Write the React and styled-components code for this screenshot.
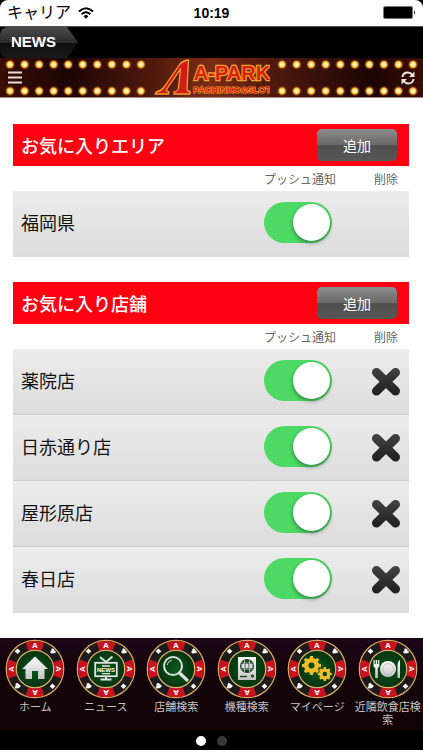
import { useState } from "react";
import styled, { createGlobalStyle } from "styled-components";

const BULBS = Array.from({ length: 10 }, (_, i) => 10 + i * 14.55);

const Bulbs = ({ flip }) => (
	<BulbStrip viewBox="0 0 152 40" $flip={flip} aria-hidden="true">
		<defs>
			<radialGradient id="bulb">
				<stop offset="0" stopColor="#fffbe0" />
				<stop offset="0.35" stopColor="#ffec8c" />
				<stop offset="0.58" stopColor="#f0a020" />
				<stop offset="0.72" stopColor="#a04c0c" stopOpacity="0.7" />
				<stop offset="1" stopColor="#70200a" stopOpacity="0" />
			</radialGradient>
		</defs>
		{BULBS.map((x) => (
			<g key={x} fill="url(#bulb)">
				<circle cx={x} cy="6.5" r="5.6" />
				<circle cx={x} cy="33" r="5.6" />
			</g>
		))}
	</BulbStrip>
);

const Logo = () => (
	<LogoArt viewBox="0 0 116 40" role="img" aria-label="A-PARK PACHINKO&SLOT">
		<path
			d="M1 36 L2 34 Q7 33 10 29 L26 6 Q29 2.5 34.5 2 L33 31 Q33 33 36 33.5 V36 H20 V34 Q24 33 24.5 30 L26.5 11 L13.5 30 Q11 33.5 15 34 L14.5 36 Z"
			fill="#d01c14"
			stroke="#f0a030"
			strokeWidth="1.3"
			strokeLinejoin="round"
		/>
		<text x="78" y="22" fontSize="20" strokeWidth="2.4">A-PARK</text>
		<text x="78" y="35" fontSize="9" strokeWidth="1.2">PACHINKO&amp;SLOT</text>
	</LogoArt>
);

const wedge = (angle) => (
	<path
		key={angle}
		d="M-9.5 -26.4 A28 28 0 0 1 9.5 -26.4 L6.4 -18 A19 19 0 0 0 -6.4 -18 Z"
		fill="#c8131f"
		transform={`rotate(${angle})`}
	/>
);

const Chip = ({ children }) => (
	<ChipArt viewBox="-30 -30 60 60" aria-hidden="true">
		<defs>
			<radialGradient id="felt">
				<stop offset="0" stopColor="#0c5a1c" />
				<stop offset="1" stopColor="#04310f" />
			</radialGradient>
			<linearGradient id="silver" x1="0" y1="0" x2="0" y2="1">
				<stop offset="0" stopColor="#fff" />
				<stop offset="1" stopColor="#c4c4c4" />
			</linearGradient>
		</defs>
		<circle r="28.7" fill="#1c1a1b" stroke="#d8a860" strokeWidth="1.3" />
		{[0, 90, 180, 270].map(wedge)}
		{[0, 90, 180, 270].map((a) => (
			<ChipLetter key={a} y="-21" transform={`rotate(${a})`}>A</ChipLetter>
		))}
		<g fill="#fff">
			<path d="M-17.5 -20.5 l2.8 2.8 -2.8 2.8 -2.8 -2.8z" />
			<path d="M17.5 14.5 l2.8 2.8 -2.8 2.8 -2.8 -2.8z" />
			<path d="M17 -20.5 q2.5 -0.5 2.2 1.5 q2 0.5 1.5 3 l-4.5 0.5 q-2 -2 0.2 -2.5 q-0.8 -1.5 0.6 -2.5z" />
			<path d="M-18.5 14 q2.5 -0.3 2.2 1.6 q2.4 0 1.6 2.4 l-2 1.2 -2.6 0.4 q-2.2 -1.2 0 -2.6 q-1 -2 0.8 -3z" />
		</g>
		<circle r="18.7" fill="url(#felt)" stroke="#d8b468" strokeWidth="1.2" />
		{children}
	</ChipArt>
);

const gear = (x, y, r) => (
	<g transform={`translate(${x} ${y})`}>
		<circle r={r * 0.56} fill="none" stroke="#f0bc28" strokeWidth={r * 0.48} />
		{[0, 45, 90, 135, 180, 225, 270, 315].map((a) => (
			<rect
				key={a}
				x={-r * 0.17}
				y={-r}
				width={r * 0.34}
				height={r * 0.32}
				fill="#f0bc28"
				transform={`rotate(${a})`}
			/>
		))}
	</g>
);

const NAV_ITEMS = [
	{
		label: "ホーム",
		icon: <path d="M0 -12.5 L13 0 H9.5 V10 H3 V2 H-3 V10 H-9.5 V0 H-13 Z" fill="url(#silver)" />,
	},
	{
		label: "ニュース",
		icon: (
			<g fill="none" stroke="#e2e2e2" strokeWidth="1.8">
				<path d="M-6 -12 L0 -7 L6.5 -12.5" />
				<rect x="-10.8" y="-6.2" width="21.6" height="13.4" />
				<path d="M-5.5 10.6 H5.5 M0 7 V10" strokeWidth="2" />
				<path d="M-4 -3 H4 M-4 4.6 H4" strokeWidth="1.4" />
				<text y="3.1" fill="#fff" stroke="none">NEWS</text>
			</g>
		),
	},
	{
		label: "店舗検索",
		icon: (
			<g fill="none" stroke="#dedede">
				<circle cx="-3" cy="-3" r="9" strokeWidth="2" />
				<path d="M3.5 4 L11 11" strokeWidth="3.2" strokeLinecap="round" />
				<path d="M-9 -4 Q-8 -8 -4 -9" strokeWidth="1" />
			</g>
		),
	},
	{
		label: "機種検索",
		icon: (
			<g>
				<rect x="-9" y="-12" width="18" height="23" rx="0.5" fill="url(#silver)" />
				<circle cy="-3" r="7" fill="#174423" />
				<path
					d="M-5.5 -6 H5.5 M-5.5 0 H5.5 M-2.5 -9 V3 M2.5 -9 V3"
					fill="none"
					stroke="#dedede"
					strokeWidth="0.7"
				/>
				<rect x="-5.5" y="-5" width="11" height="4" fill="#dedede" />
				<path d="M-1.9 -5 V-1 M1.9 -5 V-1" stroke="#174423" strokeWidth="0.7" />
				<path d="M-7 7.5 H0" stroke="#174423" strokeWidth="1.4" />
				<circle cx="5.5" cy="7" r="1.6" fill="#174423" />
			</g>
		),
	},
	{
		label: "マイページ",
		icon: (
			<>
				{gear(-5.5, -3.5, 9.5)}
				{gear(7.8, 5, 7)}
			</>
		),
	},
	{
		label: "近隣飲食店検索",
		icon: (
			<g fill="url(#silver)">
				<circle r="8" />
				<circle r="5.4" fill="none" stroke="#b4b4b4" strokeWidth="0.8" />
				<path d="M-14.5 -9 h1.2 v4 h1 v-4 h1.4 v4 h1 v-4 h1.2 v6 q0 1.5 -1.5 2 v10 h-2.6 v-10 q-1.7 -0.5 -1.7 -2z" />
				<path d="M12 9 h-2.5 V-2 q0 -6 2.5 -7z" />
			</g>
		),
	},
];

const SECTIONS = [
	{ title: "お気に入りエリア", rows: ["福岡県"], removable: false },
	{
		title: "お気に入り店舗",
		rows: ["薬院店", "日赤通り店", "屋形原店", "春日店"],
		removable: true,
	},
];

const FavoriteRow = ({ name, removable }) => {
	const [on, setOn] = useState(true);

	return (
		<Row>
			<th scope="row">{name}</th>
			<td>
				<Switch
					type="checkbox"
					role="switch"
					aria-label={name}
					checked={on}
					onChange={(e) => setOn(e.target.checked)}
				/>
			</td>
			<td>
				{removable && (
					<DeleteButton type="button" aria-label={`${name} 削除`}>
						<svg width="30" height="30" viewBox="0 0 30 30">
							<defs>
								<linearGradient id="cross" x1="0" y1="0" x2="0" y2="30" gradientUnits="userSpaceOnUse">
									<stop offset="0" stopColor="#454545" />
									<stop offset="1" stopColor="#1d1d1d" />
								</linearGradient>
							</defs>
							<path
								d="M5.5 6.5 L24.5 25 M24.5 6.5 L5.5 25"
								stroke="url(#cross)"
								strokeWidth="9"
								strokeLinecap="round"
							/>
						</svg>
					</DeleteButton>
				)}
			</td>
		</Row>
	);
};

const App = () => (
	<>
		<GlobalStyle />
		<Screen>
			<StatusBar>
				<Carrier>
					キャリア
					<svg width="16" height="12" viewBox="0 0 16 12" fill="none" stroke="#000" strokeWidth="2">
						<path d="M1 4.4 Q8 -2 15 4.4" />
						<path d="M3.6 7.2 Q8 3.2 12.4 7.2" />
						<path d="M5.6 9.2 Q8 7 10.4 9.2 L8 11.8Z" fill="#000" stroke="none" />
					</svg>
				</Carrier>
				<time>10:19</time>
				<Battery viewBox="0 0 33 14">
					<rect x="0.5" y="0.5" width="29" height="12" rx="1.5" fill="#000" stroke="#777" />
					<path d="M31 4.5 Q33 6.5 31 8.5Z" />
				</Battery>
			</StatusBar>
			<NewsBar>
				<NewsTag href="#news">NEWS</NewsTag>
			</NewsBar>
			<Banner>
				<Bulbs />
				<Logo />
				<Bulbs flip />
				<BannerButton type="button" aria-label="メニュー" $side="left">
					<svg width="14" height="13" viewBox="0 0 14 13" stroke="#e8dfd4" strokeWidth="2.2">
						<path d="M0 1.5 H14 M0 6.5 H14 M0 11.5 H14" />
					</svg>
				</BannerButton>
				<BannerButton type="button" aria-label="更新" $side="right">
					<svg width="14" height="14" viewBox="0 0 14 14" fill="none" stroke="#ece6e0" strokeWidth="2">
						<path d="M1.5 6 Q2 1.5 7 1.5 Q9.5 1.5 11.5 4" />
						<path d="M12.5 8 Q12 12.5 7 12.5 Q4.5 12.5 2.5 10" />
						<path d="M13.5 0.5 V6 H8Z M0.5 13.5 V8 H6Z" fill="#ece6e0" stroke="none" />
					</svg>
				</BannerButton>
			</Banner>
			<Main>
				{SECTIONS.map(({ title, rows, removable }) => (
					<section key={title}>
						<SectionHeader>
							<h2>{title}</h2>
							<AddButton type="button">追加</AddButton>
						</SectionHeader>
						<Favorites>
							<thead>
								<tr>
									<td />
									<PushHead scope="col">プッシュ通知</PushHead>
									<DeleteHead scope="col">削除</DeleteHead>
								</tr>
							</thead>
							<tbody>
								{rows.map((name) => (
									<FavoriteRow key={name} name={name} removable={removable} />
								))}
							</tbody>
						</Favorites>
					</section>
				))}
			</Main>
			<BottomNav>
				{NAV_ITEMS.map(({ label, icon }) => (
					<NavItem key={label} href="#">
						<Chip>{icon}</Chip>
						<span>{label}</span>
					</NavItem>
				))}
			</BottomNav>
			<Pager>
				<Dot $active />
				<Dot />
			</Pager>
		</Screen>
	</>
);

export default App;

const GlobalStyle = createGlobalStyle`
	* {
		box-sizing: border-box;
	}
	body {
		margin: 0;
		background: #000;
		font-family: "Liberation Sans", "Noto Sans CJK JP", sans-serif;
	}
	button {
		font-family: inherit;
		border: none;
		padding: 0;
		cursor: pointer;
	}
	svg {
		display: block;
	}
`;

const Screen = styled.div`
	display: flex;
	flex-direction: column;
	min-height: 100vh;
	background: #000;
`;

const StatusBar = styled.header`
	display: grid;
	grid-template-columns: 1fr auto 1fr;
	align-items: center;
	height: 26px;
	padding: 0 7px;
	background: #fff;
	border-radius: 8px 8px 0 0;

	time {
		font-size: 14px;
		font-weight: bold;
	}
`;

const Carrier = styled.div`
	display: flex;
	align-items: center;
	gap: 7px;
	font-size: 16px;
	line-height: 24px;
`;

const Battery = styled.svg`
	width: 33px;
	height: 14px;
	justify-self: end;
`;

const NewsBar = styled.div`
	display: flex;
	height: 32px;
	background: #000;
	border-top: 1px solid #555;
`;

const NewsTag = styled.a`
	display: flex;
	align-items: center;
	padding: 0 22px 2px 11px;
	background: linear-gradient(#4a4a4a, #2c2c2c 50%, #0e0e0e 52%, #1a1a1a);
	border-radius: 8px 0 0 8px;
	clip-path: polygon(0 0, 86% 0, 100% 50%, 86% 100%, 0 100%);
	color: #fff;
	font-size: 15px;
	font-weight: bold;
	text-decoration: none;
`;

const Banner = styled.div`
	position: relative;
	display: flex;
	justify-content: space-between;
	height: 40px;
	background: linear-gradient(90deg, #3a0c04, #1c0503 16%, #50190d 36%, #7a2c14 50%, #50190d 64%, #1c0503 88%, #3a0c04);
	border-bottom: 1px solid #a88;
`;

const BulbStrip = styled.svg`
	width: 152px;
	height: 40px;
	transform: ${({ $flip }) => ($flip ? "scaleX(-1)" : "none")};
`;

const LogoArt = styled.svg`
	width: 116px;
	height: 40px;

	text {
		font-family: "Liberation Sans Narrow", "Liberation Sans", sans-serif;
		font-weight: bold;
		text-anchor: middle;
		fill: #d8200f;
		stroke: #f0a030;
		paint-order: stroke;
	}
`;

const BannerButton = styled.button`
	position: absolute;
	top: 13px;
	${({ $side }) => $side}: 8px;
	background: none;
`;

const Main = styled.main`
	flex: 1;
	display: flex;
	flex-direction: column;
	gap: 25px;
	padding: 26px 14px 25px 13px;
	background: #fff;
`;

const SectionHeader = styled.div`
	display: flex;
	align-items: center;
	justify-content: space-between;
	height: 42px;
	padding: 0 12px 0 8px;
	background: #ff0010;

	h2 {
		margin: 0;
		color: #fff;
		font-size: 18px;
		font-weight: 500;
	}
`;

const AddButton = styled.button`
	width: 80px;
	height: 32px;
	border-radius: 5px;
	background: linear-gradient(#8e8e8e, #686868 50%, #4e4e4e 52%, #585858);
	color: #fff;
	font-size: 14px;
`;

const Favorites = styled.table`
	width: 100%;
	table-layout: fixed;
	border-collapse: collapse;

	th,
	td {
		padding: 0;
		font-weight: normal;
		text-align: left;
	}
	thead th {
		height: 25px;
		padding-top: 3px;
		color: #666;
		font-size: 12px;
		line-height: 16px;
	}
`;

const PushHead = styled.th`
	width: 99px;
`;

const DeleteHead = styled.th`
	width: 46px;

	thead & {
		text-align: center;
	}
`;

const Row = styled.tr`
	height: 66px;
	background: linear-gradient(#ececec, #dcdcdc);

	&:not(:last-child) {
		box-shadow: inset 0 -1px #ccc;
	}
	th,
	td {
		padding-bottom: 3px;
	}
	th {
		padding-bottom: 4px;
		padding-left: 8px;
		color: #111;
		font-size: 18px;
	}
`;

const DeleteButton = styled.button`
	display: block;
	margin: 0 auto;
	background: none;
`;

const Switch = styled.input`
	appearance: none;
	display: block;
	width: 68px;
	height: 41px;
	margin: 0;
	padding: 2px;
	border-radius: 21px;
	background: ${({ checked }) => (checked ? "#4cd964" : "#ccc")};
	cursor: pointer;

	&::before {
		content: "";
		display: block;
		width: 37px;
		height: 37px;
		margin-left: ${({ checked }) => (checked ? "27px" : "0")};
		border-radius: 50%;
		background: #fff;
		box-shadow: 0 2px 4px rgba(0, 0, 0, 0.4);
	}
`;

const BottomNav = styled.nav`
	display: grid;
	grid-template-columns: repeat(6, 1fr);
	height: 93px;
	padding-top: 1px;
	background: linear-gradient(#1c0716, #12040a 40%, #120304);
`;

const NavItem = styled.a`
	display: flex;
	flex-direction: column;
	align-items: center;
	color: #c8c4c4;
	font-size: 11px;
	line-height: 13px;
	text-align: center;
	text-decoration: none;

	span {
		margin-top: 2px;
		padding: 0 1px;
	}
`;

const ChipArt = styled.svg`
	width: 60px;
	height: 60px;

	text {
		font-size: 6px;
		font-weight: bold;
		text-anchor: middle;
	}
`;

const ChipLetter = styled.text`
	fill: #fff;

	${ChipArt} & {
		font-size: 8px;
	}
`;

const Pager = styled.footer`
	display: flex;
	align-items: center;
	justify-content: center;
	gap: 11px;
	height: 19px;
`;

const Dot = styled.span`
	width: 10px;
	height: 10px;
	border-radius: 50%;
	background: ${({ $active }) => ($active ? "#fff" : "#383838")};
`;
